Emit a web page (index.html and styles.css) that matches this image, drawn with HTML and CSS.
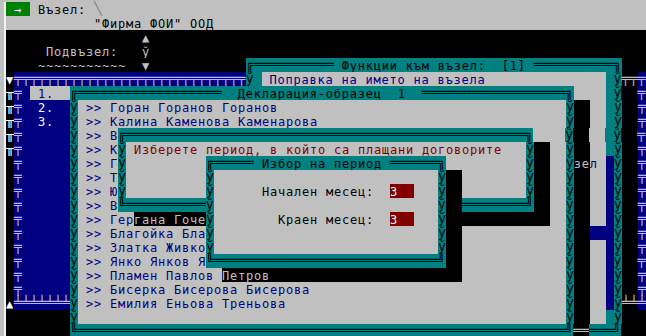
FILE: index.html
```html
<!DOCTYPE html>
<html>
<head>
  <meta charset="utf-8">
  <title>Възел</title>
  <link rel="stylesheet" href="styles.css">
</head>
<body>
  <div class="screen">
    <!-- header -->
    <div class="row top"><span class="gn"> → </span><span class="g"> Възел: </span><span class="gd bx">╲</span></div>
    <div class="row top"><span class="g">           "Фирма ФОИ" ООД</span></div>
    <div class="row"><span class="k">                 ▲</span></div>
    <div class="row"><span class="k">     Подвъзел:   ў</span></div>
    <div class="row"><span class="k">    ~~~~~~~~~~~  ▼            </span><span class="t bx">╔══════════</span><span class="t"> Функции към възел:  [1] </span><span class="t bx">══════════╗</span></div>
    <!-- list panel with windows over it -->
    <div class="row"><span class="kw">▼</span><span class="bl bx">╤╤╤╤╤╤╤╤╤╤╤╤╤╤╤╤╤╤╤╤╤╤╤╤╤╤╤╤╤</span><span class="t bx">ў </span><span class="gb"> Поправка на името на възела               </span><span class="t bx"> ў</span><span class="k bx">╤╤</span><span class="bl bx">╤</span></div>
    <div class="row"><span class="kw bx">╥</span><span class="bl bx">╤</span><span class="b"> </span><span class="gb"> 1.  </span><span class="t bx">╔══════════════════</span><span class="t">  Декларация-образец  1  </span><span class="t bx">══════════════════╗</span><span class="g">    </span><span class="t bx"> ў</span><span class="k">  </span><span class="bl bx">╤</span></div>
    <div class="row"><span class="kw bx">╥</span><span class="bl bx">╤</span><span class="b">  2.  </span><span class="t bx">ў</span><span class="gb"> >> Горан Горанов Горанов                                    </span><span class="t bx">ў</span><span class="k">  </span><span class="g">  </span><span class="t bx"> ў</span><span class="k">  </span><span class="bl bx">╤</span></div>
    <div class="row"><span class="kw bx">╥</span><span class="bl bx">╤</span><span class="b">  3.  </span><span class="t bx">ў</span><span class="gb"> >> Калина Каменова Каменарова                               </span><span class="t bx">ў</span><span class="k">  </span><span class="g">  </span><span class="t bx"> ў</span><span class="k">  </span><span class="bl bx">╤</span></div>
    <div class="row"><span class="kw bx">╥</span><span class="bl bx">╤</span><span class="b">      </span><span class="t bx">ў</span><span class="gb"> >> В</span><span class="t bx">╔══════════════════════════════════════════════════╗</span><span class="gb">    </span><span class="t bx">ў</span><span class="k">  </span><span class="g">  </span><span class="t bx"> ў</span><span class="k">  </span><span class="bl bx">╤</span></div>
    <div class="row"><span class="kw bx">╥</span><span class="bl bx">╤</span><span class="b">      </span><span class="t bx">ў</span><span class="gb"> >> К</span><span class="t bx">ў</span><span class="gr"> Изберете период, в който са плащани договорите   </span><span class="t bx">ў</span><span class="k">  </span><span class="gb">  </span><span class="t bx">ў</span><span class="k">  </span><span class="g">  </span><span class="t bx"> ў</span><span class="k">  </span><span class="bl bx">╤</span></div>
    <div class="row"><span class="k"> </span><span class="bl bx">╤</span><span class="b">      </span><span class="t bx">ў</span><span class="gb"> >> Г</span><span class="t bx">ў</span><span class="g">          </span><span class="t bx">╔═════</span><span class="t"> Избор на период </span><span class="t bx">══════╗</span><span class="g">          </span><span class="t bx">ў</span><span class="k">  </span><span class="gb">  </span><span class="t bx">ў</span><span class="k">зе</span><span class="gb">л</span><span class="g"> </span><span class="b"> </span><span class="t bx">ў</span><span class="k">  </span><span class="bl bx">╤</span></div>
    <div class="row"><span class="k"> </span><span class="bl bx">╤</span><span class="b">      </span><span class="t bx">ў</span><span class="gb"> >> Т</span><span class="t bx">ў</span><span class="g">          </span><span class="t bx">ў</span><span class="g">                            </span><span class="t bx">ў</span><span class="k">  </span><span class="g">        </span><span class="t bx">ў</span><span class="k">  </span><span class="gb">  </span><span class="t bx">ў</span><span class="k">  </span><span class="g">  </span><span class="b"> </span><span class="t bx">ў</span><span class="k">  </span><span class="bl bx">╤</span></div>
    <div class="row"><span class="k"> </span><span class="bl bx">╤</span><span class="b">      </span><span class="t bx">ў</span><span class="gb"> >> Ю</span><span class="t bx">ў</span><span class="g">          </span><span class="t bx">ў</span><span class="g">      Начален месец:  </span><span class="r">3  </span><span class="g">   </span><span class="t bx">ў</span><span class="k">  </span><span class="g">        </span><span class="t bx">ў</span><span class="k">  </span><span class="gb">  </span><span class="t bx">ў</span><span class="k">  </span><span class="g">  </span><span class="b"> </span><span class="t bx">ў</span><span class="k">  </span><span class="bl bx">╤</span></div>
    <div class="row"><span class="k"> </span><span class="bl bx">╤</span><span class="b">      </span><span class="t bx">ў</span><span class="gb"> >> В</span><span class="t bx">╚══════════</span><span class="t bx">ў</span><span class="g">                            </span><span class="t bx">ў</span><span class="k">  </span><span class="t bx">════════╝</span><span class="k">  </span><span class="gb">  </span><span class="t bx">ў</span><span class="k">  </span><span class="g">  </span><span class="b"> </span><span class="t bx">ў</span><span class="k">  </span><span class="bl bx">╤</span></div>
    <div class="row"><span class="k"> </span><span class="bl bx">╤</span><span class="b">      </span><span class="t bx">ў</span><span class="gb"> >> Гер</span><span class="k">гана Гоче</span><span class="t bx">ў</span><span class="g">        Краен месец:  </span><span class="r">3  </span><span class="g">   </span><span class="t bx">ў</span><span class="k">             </span><span class="gb">  </span><span class="t bx">ў</span><span class="k">  </span><span class="g">  </span><span class="b"> </span><span class="t bx">ў</span><span class="k">  </span><span class="bl bx">╤</span></div>
    <div class="row"><span class="k"> </span><span class="bl bx">╤</span><span class="b">      </span><span class="t bx">ў</span><span class="gb"> >> Благойка Бла</span><span class="t bx">ў</span><span class="g">                            </span><span class="t bx">ў</span><span class="k">  </span><span class="gb">             </span><span class="t bx">ў</span><span class="k">  </span><span class="b">   </span><span class="t bx">ў</span><span class="k">  </span><span class="bl bx">╤</span></div>
    <div class="row"><span class="k"> </span><span class="bl bx">╤</span><span class="b">      </span><span class="t bx">ў</span><span class="gb"> >> Златка Живко</span><span class="t bx">ў</span><span class="g">                            </span><span class="t bx">ў</span><span class="k">  </span><span class="gb">             </span><span class="t bx">ў</span><span class="k">  </span><span class="g">  </span><span class="b"> </span><span class="t bx">ў</span><span class="k">  </span><span class="bl bx">╤</span></div>
    <div class="row"><span class="k"> </span><span class="bl bx">╤</span><span class="b">      </span><span class="t bx">ў</span><span class="gb"> >> Янко Янков Я</span><span class="t bx">╚════════════════════════════╝</span><span class="k">  </span><span class="gb">             </span><span class="t bx">ў</span><span class="k">  </span><span class="g">  </span><span class="b"> </span><span class="t bx">ў</span><span class="k">  </span><span class="bl bx">╤</span></div>
    <div class="row"><span class="k"> </span><span class="bl bx">╤</span><span class="b">      </span><span class="t bx">ў</span><span class="gb"> >> Пламен Павлов </span><span class="k">Петров                        </span><span class="gb">             </span><span class="t bx">ў</span><span class="k">  </span><span class="g">  </span><span class="b"> </span><span class="t bx">ў</span><span class="k">  </span><span class="bl bx">╤</span></div>
    <div class="row"><span class="k"> </span><span class="bl bx">╤</span><span class="b">      </span><span class="t bx">ў</span><span class="gb"> >> Бисерка Бисерова Бисерова                                </span><span class="t bx">ў</span><span class="k">  </span><span class="g">  </span><span class="b"> </span><span class="t bx">ў</span><span class="k">  </span><span class="bl bx">╤</span></div>
    <div class="row"><span class="kw">▲</span><span class="bl bx">╧╧╧╧╧╧╧</span><span class="t bx">ў</span><span class="gb"> >> Емилия Еньова Треньова                                   </span><span class="t bx">ў</span><span class="k">  </span><span class="g">  </span><span class="b"> </span><span class="t bx">ў</span><span class="k bx">╧╧</span><span class="bl bx">╧</span></div>
    <div class="row"><span class="k">        </span><span class="t bx">ў</span><span class="gb">                                                             </span><span class="t bx">ў</span><span class="k">  </span><span class="g">  </span><span class="t bx"> ў</span></div>
    <div class="row"><span class="k">        </span><span class="t bx">╚═════════════════════════════════════════════════════════════╝</span><span class="k bx">══</span><span class="t bx">═══╝</span></div>
  </div>
</body>
</html>
```

FILE: styles.css
```css
html, body {
  overflow: hidden;
}
body {
  margin: 0;
  background: #c0c0c0;
}
.screen {
  margin: 2px 0 0 4px;
  border-left: 2px solid #f4f4f4;
  width: 640px;
  font-family: "DejaVu Sans Mono", monospace;
}
.row {
  display: flex;
  width: 640px;
  height: 14px;
  background: #000;
}
.row.top {
  background: #c0c0c0;
}
.row span {
  flex: none;
  white-space: pre;
  font-size: 12px;
  letter-spacing: 0.7754px;
  line-height: 17px;
}
/* box drawing glyphs and window sides use the full 8px cell so lines join */
.row .bx {
  font-size: 13.288px;
  letter-spacing: 0;
  line-height: 14px;
}
.k { background: #000; color: #c0c0c0; }
.kw { background: #000; color: #fff; }
.g { background: #c0c0c0; color: #000; }
.gd { background: #c0c0c0; color: #808080; }
.gb { background: #c0c0c0; color: #000080; }
.gr { background: #c0c0c0; color: #800000; }
.t { background: #008080; color: #000; }
.b { background: #000080; color: #fff; }
.bl { background: #000080; color: #c0c0c0; }
.r { background: #800000; color: #fff; }
.gn { background: #008000; color: #fff; }
```
